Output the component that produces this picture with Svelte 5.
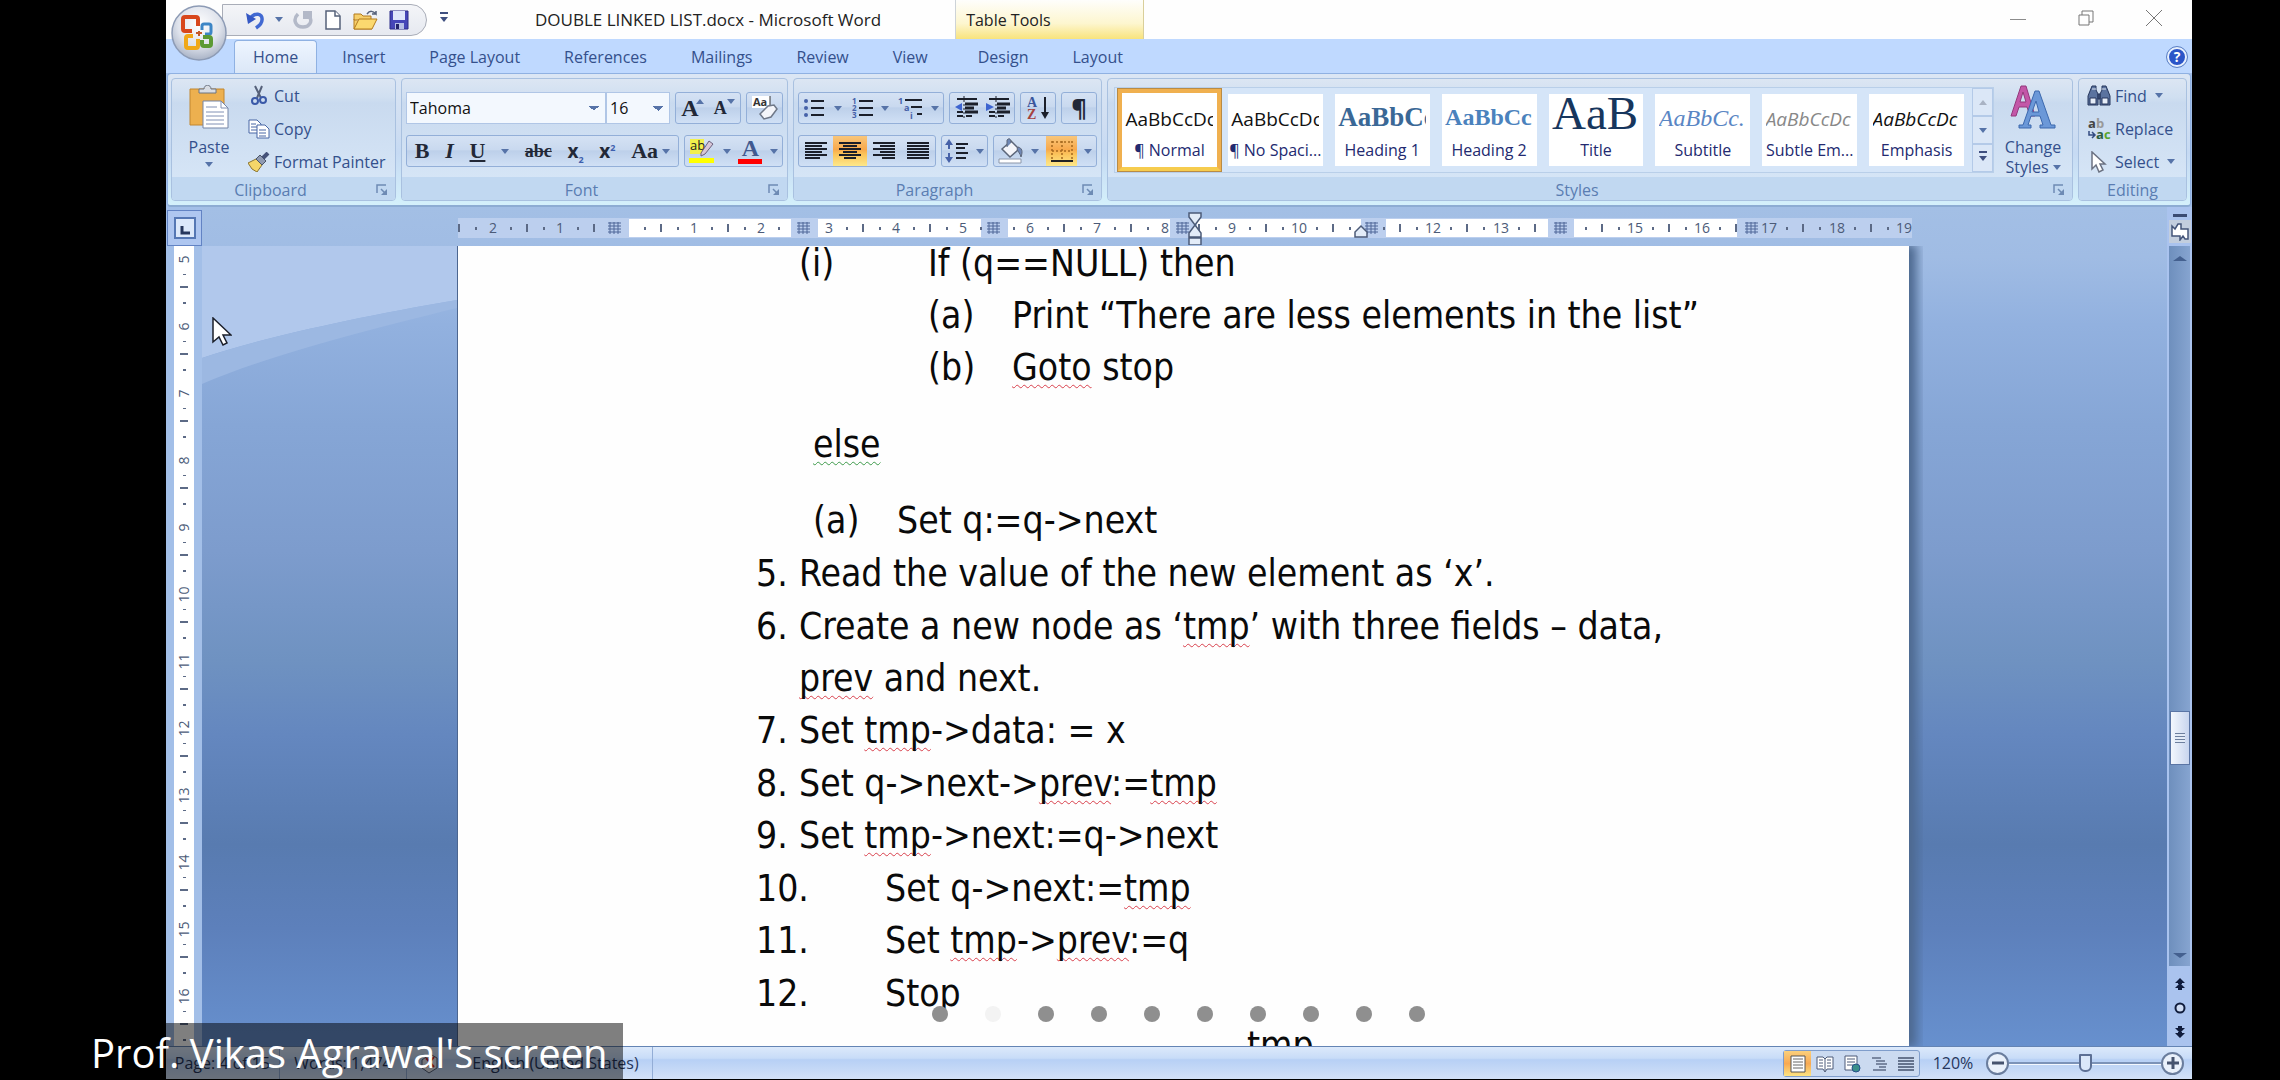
<script lang="ts">
  /**
   * Shared word processor window: title bar, ribbon, rulers, document and status bar,
   * with the presenter caption and the page dots floating above it.
   */

  const tabs = ['Home', 'Insert', 'Page Layout', 'References', 'Mailings', 'Review', 'View'];
  const tableTabs = ['Design', 'Layout'];

  const styles = [
    { name: '¶ Normal', sample: 'AaBbCcDc', kind: 'plain' },
    { name: '¶ No Spaci...', sample: 'AaBbCcDc', kind: 'plain' },
    { name: 'Heading 1', sample: 'AaBbCc', kind: 'h1' },
    { name: 'Heading 2', sample: 'AaBbCc', kind: 'h2' },
    { name: 'Title', sample: 'AaB', kind: 'title' },
    { name: 'Subtitle', sample: 'AaBbCc.', kind: 'subtitle' },
    { name: 'Subtle Em...', sample: 'AaBbCcDc', kind: 'subtle' },
    { name: 'Emphasis', sample: 'AaBbCcDc', kind: 'emphasis' }
  ];

  // Ruler geometry, in pixels
  const UNIT = 67.2;
  const ORIGIN = 169;
  const rulerX = (n: number) => ORIGIN + Math.round(n * UNIT);
  const rulerNumbers = [-2, -1, 1, 2, 3, 4, 5, 6, 7, 8, 9, 10, 12, 13, 15, 16, 17, 18, 19];
  const halves = Array.from({ length: 22 }, (_, i) => rulerX(i - 3) + 34);
  const columns = [156, 345, 535, 724, 913, 1102, 1293];
  const sideNumbers = [5, 6, 7, 8, 9, 10, 11, 12, 13, 14, 15, 16];

  const dots = Array.from({ length: 10 }, (_, i) => i);

  let activeTab = $state('Home');
  let activeStyle = $state('¶ Normal');
  let currentDot = $state(1);
  let zoom = $state(50);
</script>

{#snippet lines(widths: number[], right = false, center = false)}
  <svg width="22" height="20" viewBox="0 0 22 20" stroke="#1b1f2a" stroke-width="2">
    {#each widths as w, i}
      {@const x = right ? 22 - w : center ? (22 - w) / 2 : 0}
      <path d="M{x} {2 + i * 3}h{w}" />
    {/each}
  </svg>
{/snippet}

{#snippet launcher()}
  <button class="launcher" aria-label="More options">
    <svg width="12" height="12" viewBox="0 0 12 12" fill="none" stroke="#6e8bb4" stroke-width="1.5">
      <path d="M1 9V1h9" /><path d="M5 5l5 5" /><path d="M11 5v6H5z" fill="#6e8bb4" stroke="none" />
    </svg>
  </button>
{/snippet}

<div class="stage">
  <div class="window">
    <header class="title-bar">
      <button class="orb" aria-label="Office button">
        <svg width="58" height="58" viewBox="0 0 58 58">
          <defs>
            <radialGradient id="orb" cx="50%" cy="35%" r="65%">
              <stop offset="0" stop-color="#fff" />
              <stop offset="0.6" stop-color="#dfe3ec" />
              <stop offset="1" stop-color="#a9b3c6" />
            </radialGradient>
          </defs>
          <circle cx="29" cy="29" r="27" fill="url(#orb)" stroke="#8d9bb5" stroke-width="1.5" />
          <g fill="none" stroke-width="4">
            <path d="M22 27h-7q-2 0-2-2V15q0-2 2-2h11q2 0 2 2v7" stroke="#d8471c" />
            <path d="M32 26v-4q0-2 2-2h5q2 0 2 2v6q0 2-2 2h-4" stroke="#3d86c6" stroke-width="3" />
            <path d="M23 32h-5q-2 0-2 2v8q0 2 2 2h8q2 0 2-2v-7" stroke="#f0a818" />
            <path d="M33 33h6q2 0 2 2v5q0 2-2 2h-5q-2 0-2-2v-4" stroke="#5c9a34" />
          </g>
          <path d="M29 27v5M26 29h6" stroke="#c45a2a" stroke-width="2" />
        </svg>
      </button>

      <div class="quick">
        <button aria-label="Undo">
          <svg width="20" height="20" viewBox="0 0 20 20" fill="none">
            <path d="M5 9C9 2 18 3 17 10c0 4-3 6-6 8" stroke="#4169d2" stroke-width="3.500" /><path d="M1 3l2 11 8-5z" fill="#3558c4" />
          </svg>
        </button>
        <span class="arrow"></span>
        <button aria-label="Redo">
          <svg width="20" height="20" viewBox="0 0 20 20" fill="none">
            <path d="M5 4c-6 6-2 13 5 13s9-6 7-9" stroke="#b3b9c8" stroke-width="3.500" /><path d="M10 1h9v8H10z" fill="#b3b9c8" />
          </svg>
        </button>
        <button aria-label="New">
          <svg width="20" height="20" viewBox="0 0 20 20" fill="#fff" stroke="#56617a" stroke-width="1.5">
            <path d="M3 1h9l5 5v13H3z" /><path d="M12 1v5h5" />
          </svg>
        </button>
        <button aria-label="Open">
          <svg width="26" height="20" viewBox="0 0 26 20" stroke="#b37a1c">
            <path d="M1 4h7l2 2h8v4H1zM1 9v10h18" fill="#f6cf6b" />
            <path d="M1 19l5-10h18l-5 10z" fill="#fbd96f" />
            <path d="M14 4c3-4 6-3 9 0v-3M23 4h-4" fill="none" stroke="#56617a" stroke-width="1.5" />
          </svg>
        </button>
        <button aria-label="Save">
          <svg width="20" height="20" viewBox="0 0 20 20">
            <path d="M1 1h18v18H1z" fill="#4646b8" stroke="#2d2d88" />
            <path d="M4 1h12v9H4z" fill="#dfe6fb" /><path d="M6 13h9v6H6z" fill="#b7bfe6" />
            <path d="M7 14h3v5H7z" fill="#23236b" />
          </svg>
        </button>
      </div>
      <button class="customize" aria-label="Customize toolbar"><span class="arrow lined"></span></button>

      <h1>DOUBLE LINKED LIST.docx - Microsoft Word</h1>
      <div class="context">Table Tools</div>

      <div class="controls">
        <button aria-label="Minimize">
          <svg width="16" height="16" stroke="#8c8c8c"><path d="M0 9.500h16" /></svg>
        </button>
        <button aria-label="Restore">
          <svg width="16" height="16" fill="none" stroke="#777"><path d="M1 5h10v10H1zM4 5V1h11v11h-4" /></svg>
        </button>
        <button aria-label="Close">
          <svg width="16" height="16" stroke="#777"><path d="M0 0l16 16M16 0L0 16" /></svg>
        </button>
      </div>
    </header>

    <nav class="tabs">
      {#each tabs as tab}
        <button class:active={activeTab === tab} onclick={() => (activeTab = tab)}>{tab}</button>
      {/each}
      <div class="table-tabs">
        {#each tableTabs as tab}
          <button class:active={activeTab === tab} onclick={() => (activeTab = tab)}>{tab}</button>
        {/each}
      </div>
      <button class="help" aria-label="Help">?</button>
    </nav>

    <div class="ribbon">
      <section class="group clipboard">
        <div class="body">
          <button class="big">
            <svg width="40" height="44" viewBox="0 0 40 44">
              <path d="M1 4h34v36H1z" fill="#edb04f" stroke="#c18630" />
              <path d="M10 8V4h5c0-5 7-5 7 0h5v4z" fill="#d9dde4" stroke="#6d7482" />
              <path d="M14 16h18l7 7v20H14z" fill="#fff" stroke="#7585a6" />
              <path d="M32 16v7h7M17 22h11M17 27h18M17 31h18M17 35h18M17 39h18" fill="none" stroke="#8090b4" />
            </svg>
            <span>Paste</span>
            <span class="arrow"></span>
          </button>
          <div class="stack">
            <button>
              <svg width="22" height="22" viewBox="0 0 22 22" fill="none">
                <path d="M7 1l6 12M14 1L9 13" stroke="#56617a" stroke-width="2" />
                <circle cx="7" cy="16" r="3" stroke="#3a59a8" stroke-width="2" /><circle cx="15" cy="15" r="3" stroke="#3a59a8" stroke-width="2" />
              </svg>Cut
            </button>
            <button>
              <svg width="22" height="20" viewBox="0 0 22 20" fill="#fff" stroke="#4867a5">
                <path d="M1 1h8l4 4v9H1zM3 5h5M3 8h7M3 11h7" /><path d="M9 6h8l4 4v9H9zM11 11h7M11 14h7M11 17h7" />
              </svg>Copy
            </button>
            <button>
              <svg width="22" height="20" viewBox="0 0 22 20">
                <path d="M0 11l8-4 6 6-5 7-5-3z" fill="#f5d669" stroke="#8a7430" />
                <path d="M8 7l4-4 6 6-4 4z" fill="#8f9ab2" stroke="#4b5568" /><path d="M15 6l5-5" stroke="#46537a" stroke-width="4" />
              </svg>Format Painter
            </button>
          </div>
        </div>
        <footer><span>Clipboard</span>{@render launcher()}</footer>
      </section>

      <section class="group font">
        <div class="body rows">
          <div class="row">
            <div class="combo">
              <select class="family" aria-label="Font"><option>Tahoma</option></select>
              <select class="size" aria-label="Font size"><option>16</option></select>
            </div>
            <div class="set pair">
              <button class="serif grow" aria-label="Grow font">A<i class="up"></i></button>
              <button class="serif shrink" aria-label="Shrink font">A<i class="down"></i></button>
            </div>
            <div class="set">
              <button aria-label="Clear formatting">
                <svg width="28" height="26" viewBox="0 0 28 26">
                  <path d="M1 1h18v12H1z" fill="#fff" />
                  <text x="2" y="11" font-size="11" font-weight="700" fill="#333">Aa</text>
                  <path d="M19 1v12" stroke="#333" />
                  <path d="M9 19l8-8 6-1 3 4-6 8-7 2z" fill="#f4f5fa" stroke="#6f7888" stroke-width="1.500" />
                </svg>
              </button>
            </div>
          </div>
          <div class="row">
            <div class="set chars">
              <button class="serif"><b>B</b></button>
              <button class="serif"><b><i>I</i></b></button>
              <button class="serif"><b class="under">U</b></button>
              <span class="arrow"></span>
              <button class="serif struck">abc</button>
              <button class="script"><b>x<sub>2</sub></b></button>
              <button class="script"><b>x<sup>2</sup></b></button>
              <button class="serif case">Aa<span class="arrow"></span></button>
            </div>
            <div class="set colours">
              <button aria-label="Highlight colour">
                <svg width="26" height="26" viewBox="0 0 26 26">
                  <path d="M1 1h14v15H1z" fill="#f2f04c" />
                  <text x="1" y="12" font-size="13" fill="#222">ab</text>
                  <path d="M12 15L20 3l4 3-8 10-4 2z" fill="#d8c7d8" stroke="#6b5f7c" />
                  <path d="M0 20h25v5H0z" fill="#ff0" />
                </svg>
              </button>
              <span class="arrow"></span>
              <button class="serif" aria-label="Font colour"><span class="ink">A</span></button>
              <span class="arrow"></span>
            </div>
          </div>
        </div>
        <footer><span>Font</span>{@render launcher()}</footer>
      </section>

      <section class="group paragraph">
        <div class="body rows">
          <div class="row">
            <div class="set lists">
              <button aria-label="Bullets">
                <svg width="22" height="22" viewBox="0 0 22 22" stroke="#1b1f2a" stroke-width="2">
                  <path d="M8 4h13M8 11h13M8 18h13" />
                  <g fill="#4661a8" stroke="none"><circle cx="3" cy="4" r="2" /><circle cx="3" cy="11" r="2" /><circle cx="3" cy="18" r="2" /></g>
                </svg>
              </button>
              <span class="arrow"></span>
              <button aria-label="Numbering">
                <svg width="22" height="22" viewBox="0 0 22 22">
                  <path d="M8 4h14M8 11h14M8 18h14" stroke="#1b1f2a" stroke-width="2" />
                  <g font-size="8" font-weight="700" fill="#4661a8"><text x="1" y="7">1</text><text x="1" y="14">2</text><text x="1" y="21">3</text></g>
                </svg>
              </button>
              <span class="arrow"></span>
              <button aria-label="Multilevel list">
                <svg width="24" height="24" viewBox="0 0 24 24">
                  <path d="M7 4h17M13 11h11M19 18h5" stroke="#1b1f2a" stroke-width="2" />
                  <g font-size="9" font-weight="700" fill="#4661a8"><text x="0" y="8">1</text><text x="6" y="15">a</text><text x="12" y="23">i</text></g>
                </svg>
              </button>
              <span class="arrow"></span>
            </div>
            <div class="set pair">
              {#each ['M8 7L1 11l7 4z', 'M0 7l8 4-8 4z'] as head, i}
                <button aria-label={i ? 'Increase indent' : 'Decrease indent'}>
                  <svg width="24" height="24" viewBox="0 0 24 24">
                    <path d="M3 3h20M3 20h6M12 20h6M3 16h6" stroke="#1b1f2a" stroke-width="2" />
                    <path d="M11 8h13M11 12h9M11 16h13" stroke="#1b1f2a" stroke-width="3" />
                    <path d="M10 0v24" stroke="#1b1f2a" stroke-dasharray="2 2" /><path d={head} fill="#3d64d0" />
                  </svg>
                </button>
              {/each}
            </div>
            <div class="set">
              <button aria-label="Sort">
                <svg width="24" height="26" viewBox="0 0 24 26" font-family="Liberation Serif" font-size="14" font-weight="700">
                  <text x="1" y="12" fill="#3a559c">A</text><text x="1" y="24" fill="#a5423e">Z</text>
                  <path d="M19 2v16" fill="none" stroke="#1b1f2a" stroke-width="2" /><path d="M15 17h8l-4 7z" fill="#1b1f2a" />
                </svg>
              </button>
            </div>
            <div class="set"><button class="pilcrow" aria-label="Show marks">¶</button></div>
          </div>
          <div class="row">
            <div class="set aligns">
              <button aria-label="Align left">{@render lines([22, 17, 22, 17, 22, 15])}</button>
              <button class="on" aria-label="Center">{@render lines([22, 14, 22, 14, 22, 12], false, true)}</button>
              <button aria-label="Align right">{@render lines([22, 15, 22, 15, 22, 13], true)}</button>
              <button aria-label="Justify">{@render lines([22, 22, 22, 22, 22, 22])}</button>
            </div>
            <div class="set spacing">
              <button aria-label="Line spacing">
                <svg width="24" height="24" viewBox="0 0 24 24">
                  <path d="M11 5h12M11 9h9M11 14h12M11 19h10" stroke="#1b1f2a" stroke-width="2" />
                  <path d="M4 0l4 6H5v4H3V6H0zM4 24l4-6H5v-4H3v4H0z" fill="#4661a8" />
                </svg>
              </button>
              <span class="arrow"></span>
            </div>
            <div class="set fills">
              <button aria-label="Shading">
                <svg width="26" height="26" viewBox="0 0 26 26">
                  <path d="M4 11l9-8 8 8-9 8z" fill="#f4f5fa" stroke="#5c6679" stroke-width="1.500" />
                  <path d="M9 9V2c3-3 4 0 4 3M20 9c4 1 5 4 3 10-1-4-3-5-4-8z" fill="#6f87b5" stroke="#5c6679" />
                  <path d="M1 21h22v4H1z" fill="#fff" stroke="#8c97aa" />
                </svg>
              </button>
              <span class="arrow"></span>
              <button class="on" aria-label="Borders">
                <svg width="22" height="22" viewBox="0 0 22 22" fill="none">
                  <path d="M1 2h20M1 11h20M1 1v18M11 1v18M21 1v18" stroke="#a5691f" stroke-width="1.500" stroke-dasharray="2 2" />
                  <path d="M0 21h22" stroke="#222" stroke-width="2" />
                </svg>
              </button>
              <span class="arrow"></span>
            </div>
          </div>
        </div>
        <footer><span>Paragraph</span>{@render launcher()}</footer>
      </section>

      <section class="group styles">
        <div class="body">
          <div class="gallery">
            {#each styles as style}
              <button class="card" class:chosen={activeStyle === style.name} onclick={() => (activeStyle = style.name)}>
                <span class="sample {style.kind}">{style.sample}</span>
                <span class="name">{style.name}</span>
              </button>
            {/each}
            <div class="steppers">
              <button aria-label="Scroll up"><i class="up"></i></button>
              <button aria-label="Scroll down"><span class="arrow"></span></button>
              <button aria-label="More styles"><span class="arrow lined"></span></button>
            </div>
          </div>
          <button class="big change">
            <svg width="46" height="44" viewBox="0 0 46 44">
              <path fill-rule="evenodd" d="M1 31L11 1h5l9 30h-5l-3-9H9l-3 9zM10 17h6L13 7z" fill="#c357a8" stroke="#93397c" />
              <path fill-rule="evenodd" d="M9 43v-3h4L25 6h4l12 34h4v3H30v-3h3l-3-9h-9l-3 9h3v3zM22 27h7l-3-11z" fill="#6b98d8" stroke="#3c68ad" />
            </svg>
            <span>Change</span>
            <span class="with-arrow">Styles<span class="arrow"></span></span>
          </button>
        </div>
        <footer><span>Styles</span>{@render launcher()}</footer>
      </section>

      <section class="group editing">
        <div class="body">
          <div class="stack">
            <button>
              <svg width="24" height="22" viewBox="0 0 24 22" fill="#5b739f" stroke="#26365c">
                <path d="M5 1h4v4l2 4v11H1v-9zM15 1h4l4 10v9H13V9l2-4zM11 9h2v5h-2z" /><path d="M3 13h6v6H3zM15 13h6v6h-6z" fill="#e6edf8" />
                <path d="M5 4h4M15 4h4" stroke="#dfe7f5" />
              </svg>Find<span class="arrow"></span>
            </button>
            <button>
              <svg width="24" height="22" viewBox="0 0 24 22" font-size="13" font-weight="700">
                <text x="1" y="10" fill="#444">a</text><text x="9" y="10" fill="#999">b</text><text x="9" y="21" fill="#2f5e40">a</text><text x="17" y="21" fill="#58a52f">c</text>
                <path d="M2 13v4h5M5 14l3 3-3 3" fill="none" stroke="#334b80" stroke-width="1.500" />
              </svg>Replace
            </button>
            <button>
              <svg width="24" height="22" viewBox="0 0 24 22" fill="#fff" stroke="#6b7282" stroke-width="1.500">
                <path d="M5 1v17l4-4 3 7 4-2-3-6h5z" />
              </svg>Select<span class="arrow"></span>
            </button>
          </div>
        </div>
        <footer><span>Editing</span></footer>
      </section>
    </div>

    <main class="workspace">
      <div class="side">
        <button class="tab-stop" aria-label="Tab stop">
          <svg width="22" height="22" viewBox="0 0 22 22"><path d="M1 1h20v20H1z" fill="#dce8fa" stroke="#5577b4" stroke-width="2" /><path d="M8 9v7h8" fill="none" stroke="#26365c" stroke-width="3" /></svg>
        </button>
        <div class="side-ruler">
          {#each sideNumbers as n}
            <div class="mark"><span>{n}</span><i class="dot"></i><i class="dash"></i><i class="dot"></i></div>
          {/each}
        </div>
      </div>

      <div class="desk">
        <div class="ruler">
          <svg width="1454" height="38" font-size="14" fill="#4c5b78">
            <path d="M0 11h1454v20H0z" fill="#bccfee" />
            <path d="M171 12h162v18H171zM360 12h163v18H360zM550 12h162v18H550zM739 12h168v18H739zM928 12h162v18H928zM1116 12h163v18H1116z" fill="#fff" />
            {#each halves as x}
              {#if x < 1453}
                <path d="M{x} 17v8M{x - 16} 20v3M{x + 17} 20v3" stroke="#5c6a86" stroke-width="2" />
              {/if}
            {/each}
            {#each rulerNumbers as n}
              <text x={rulerX(n)} y="26" text-anchor="middle">{Math.abs(n)}</text>
            {/each}
            {#each columns as x}
              <path d="M{x - 10} 12h20v18h-20z" fill="#bccfee" />
              <path d="M{x - 6} 16h13M{x - 6} 19h13M{x - 6} 22h13M{x - 6} 25h13M{x - 4} 15v12M{x} 15v12M{x + 4} 15v12" stroke="#4f6798" />
            {/each}
            <g fill="#e3ecf8" stroke="#4c5b78" stroke-width="1.500">
              <path d="M731 6h12v4l-6 8-6-8zM731 30v-4l6-8 6 8v4zM731 31h12v7h-12z" />
              <path d="M897 30v-5l6-6 6 6v5z" />
            </g>
          </svg>
        </div>

        <div class="canvas">
          <svg class="sweep" viewBox="0 0 256 140" preserveAspectRatio="none">
            <path d="M0 0h256v54C150 72 60 92 0 112z" fill="#b1c8ec" />
            <path d="M0 112C60 92 150 72 256 54v8C150 88 60 112 0 138z" fill="#9cb8e2" />
          </svg>
          <article class="page">
            <div class="text">
              <div class="line i1"><span class="m129">(i)</span>If (q==NULL) then</div>
              <div class="line i2"><span class="m84">(a)</span>Print “There are less elements in the list”</div>
              <div class="line i2"><span class="m84">(b)</span><span><u>Goto</u> stop</span></div>
              <div class="line i3 apart"><span><u class="grammar">else</u></span></div>
              <div class="line i3"><span class="m84">(a)</span>Set q:=q-&gt;next</div>
              <ol>
                <li><span class="m43">5.</span>Read the value of the new element as ‘x’.</li>
                <li><span class="m43">6.</span><span>Create a new node as ‘<u>tmp</u>’ with three fields – data,<br /><u>prev</u> and next.</span></li>
                <li><span class="m43">7.</span><span>Set <u>tmp</u>-&gt;data: = x</span></li>
                <li><span class="m43">8.</span><span>Set q-&gt;next-&gt;<u>prev</u>:=<u>tmp</u></span></li>
                <li><span class="m43">9.</span><span>Set <u>tmp</u>-&gt;next:=q-&gt;next</span></li>
                <li><span class="m129">10.</span><span>Set q-&gt;next:=<u>tmp</u></span></li>
                <li><span class="m129">11.</span><span>Set <u>tmp</u>-&gt;<u>prev</u>:=q</span></li>
                <li><span class="m129">12.</span>Stop</li>
              </ol>
              <div class="line i4">tmp</div>
            </div>
          </article>
        </div>
      </div>

      <div class="scroll">
        <i class="split"></i>
        <button class="view-ruler" aria-label="View ruler">
          <svg width="18" height="18" viewBox="0 0 18 18" fill="#fff" stroke="#44557a" stroke-width="1.500"><path d="M1 3l3 3 3-5h3v5h7v10h-3l-2-3-3 4v-4H1z" /></svg>
        </button>
        <div class="track">
          <i class="up"></i>
          <div class="thumb"></div>
          <span class="arrow"></span>
        </div>
        <button aria-label="Previous page"><svg width="12" height="12" viewBox="0 0 12 12" fill="#101c3c"><path d="M6 0l5 5H8v1h-1l4 4H8v2H4v-2H1l4-4H4V5H1z" /></svg></button>
        <button aria-label="Browse object"><svg width="12" height="12" viewBox="0 0 12 12"><circle cx="6" cy="6" r="4.500" fill="#cfdcf3" stroke="#101c3c" stroke-width="2" /></svg></button>
        <button aria-label="Next page"><svg width="12" height="12" viewBox="0 0 12 12" fill="#101c3c"><path d="M6 12l5-5H8V6H7l4-4H8V0H4v2H1l4 4H4v1H1z" /></svg></button>
      </div>
    </main>

    <footer class="status">
      <button class="pages">Page: 4 of 15</button>
      <button class="words">Words: 1,474</button>
      <button class="language">
        <svg width="20" height="22" viewBox="0 0 20 22"><path d="M2 8l8-6 7 4v10l-8 5-7-5z" fill="#e8eaf2" stroke="#55617a" /><path d="M6 6l8 9M14 5L6 15" stroke="#d02f2f" stroke-width="2" /></svg>
        English (United States)
      </button>
      <div class="views">
        <button class="on" aria-label="Print layout"><svg width="18" height="18" viewBox="0 0 18 18"><path d="M2 1h14v16H2z" fill="#fff" stroke="#555" /><path d="M4 4h10M4 7h10M4 10h10M4 13h10" stroke="#666" /></svg></button>
        <button aria-label="Full screen reading"><svg width="18" height="18" viewBox="0 0 18 18" fill="#fff" stroke="#4c5b78"><path d="M1 2h6l2 2 2-2h6v12h-6l-2 3-2-3H1zM9 4v12M3 5h4M3 8h4M3 11h4M11 5h4M11 8h4M11 11h4" /></svg></button>
        <button aria-label="Web layout"><svg width="18" height="18" viewBox="0 0 18 18"><path d="M2 1h12v14H2zM4 4h8M4 7h8M4 10h6" fill="#fff" stroke="#4c5b78" /><circle cx="13" cy="13" r="4" fill="#3b8f8a" stroke="#27508a" /></svg></button>
        <button aria-label="Outline"><svg width="18" height="18" viewBox="0 0 18 18" stroke="#5f6c86" stroke-width="1.500"><path d="M2 3h9M6 6h9M6 9h11M9 12h7M3 15h13" /></svg></button>
        <button aria-label="Draft"><svg width="18" height="18" viewBox="0 0 18 18" stroke="#46536e" stroke-width="1.500"><path d="M1 3h16M1 6h16M1 9h16M1 12h16M1 15h16" /></svg></button>
      </div>
      <button class="percent">120%</button>
      <button class="round" aria-label="Zoom out" onclick={() => (zoom -= 10)}><svg width="14" height="14" stroke="#46536e" stroke-width="3"><path d="M1 7h12" /></svg></button>
      <input type="range" min="0" max="100" bind:value={zoom} aria-label="Zoom" />
      <button class="round" aria-label="Zoom in" onclick={() => (zoom += 10)}><svg width="14" height="14" stroke="#46536e" stroke-width="3"><path d="M1 7h12M7 1v12" /></svg></button>
    </footer>
  </div>

  <svg class="pointer" width="20" height="30" viewBox="0 0 20 30">
    <path d="M1 1v24l6-5 4 8 4-2-4-8h8z" fill="#fff" stroke="#1b1f2a" stroke-width="1.500" />
  </svg>
  <div class="caption">Prof. Vikas Agrawal's screen</div>
  <div class="dots">
    {#each dots as d}
      <button class:current={d === currentDot} aria-label="Screen {d + 1}" onclick={() => (currentDot = d)}></button>
    {/each}
  </div>
</div>

<style>
  :global(body) {
    margin: 0;
    background: #000;
  }

  .stage {
    --ui: 'Open Sans', 'Noto Sans', sans-serif;
    --navy: #34508c;
    position: relative;
    box-sizing: border-box;
    height: 100vh;
    padding: 0 88px 1px 166px;
    overflow: hidden;
    background: #000;
    color: var(--navy);
    font: 16px/20px var(--ui);
  }

  .window {
    display: flex;
    flex-direction: column;
    height: 100%;
    background: #a3bfe8;
  }

  button {
    display: flex;
    align-items: center;
    justify-content: center;
    padding: 0;
    border: 0;
    background: none;
    color: inherit;
    font: inherit;
    white-space: nowrap;
  }

  svg {
    display: block;
    flex: none;
  }

  .arrow,
  .down,
  .up {
    flex: none;
    width: 0;
    height: 0;
    border: 4px solid transparent;
    border-top: 5px solid #5673a8;
    border-bottom: 0;
  }

  .up {
    border-top: 0;
    border-bottom: 5px solid #5673a8;
  }

  .lined {
    position: relative;
    border-top-color: #3f4f80;
  }

  /* Bar above the arrow */
  .lined::before {
    position: absolute;
    top: -10px;
    left: -4px;
    width: 8px;
    height: 2px;
    background: #3f4f80;
    content: '';
  }

  /* Title bar */
  .title-bar {
    position: relative;
    display: flex;
    flex: none;
    align-items: center;
    height: 39px;
    background: #fefefe;
  }

  .orb {
    position: absolute;
    z-index: 2;
    top: 4px;
    left: 4px;
  }

  .quick {
    display: flex;
    align-items: center;
    gap: 10px;
    box-sizing: border-box;
    height: 32px;
    margin-left: 56px;
    padding: 0 17px 0 22px;
    border: 1px solid #a9adb8;
    border-radius: 0 16px 16px 0;
    background: linear-gradient(#f4f5f8, #e6e9f0);
  }

  .customize {
    width: 34px;
  }

  h1 {
    margin: 0 74px;
    color: #222;
    font: 17px/20px var(--ui);
    white-space: nowrap;
  }

  .context {
    box-sizing: border-box;
    width: 189px;
    height: 100%;
    padding: 10px;
    border-right: 1px solid #d9cf9a;
    border-left: 1px solid #cdd3d8;
    background: linear-gradient(#fefefc, #fdf6cf 60%, #f8e37c);
    color: #222;
  }

  .controls {
    display: flex;
    gap: 52px;
    margin-left: auto;
    padding: 0 30px 4px 0;
  }

  /* Tabs */
  .tabs {
    display: flex;
    flex: none;
    gap: 8px;
    height: 34px;
    padding: 0 6px 0 69px;
    background: #bfd9ff;
  }

  .tabs button {
    padding: 0 18px;
    border: 1px solid transparent;
    border-bottom: 0;
    border-radius: 4px 4px 0 0;
    margin: 1px -1px 0;
  }

  .tabs button.active {
    border-color: #8fb1e2;
    background: linear-gradient(#eef5ff, #dbe7f7);
  }

  .table-tabs {
    display: flex;
    gap: 8px;
    margin-left: 6px;
  }

  .tabs .help {
    align-self: center;
    width: 20px;
    height: 20px;
    margin-left: auto;
    padding: 0;
    border: 2px solid #e8f0fd;
    border-radius: 50%;
    outline: 1px solid #5b7fc4;
    background: #2b55c8;
    color: #fff;
    font: 700 14px/16px var(--ui);
  }

  /* Ribbon */
  .ribbon {
    display: flex;
    flex: none;
    gap: 5px;
    box-sizing: border-box;
    height: 134px;
    margin: 0 1px;
    padding: 4px 3px;
    border: 1px solid #8fb1e2;
    border-bottom: 2px solid #8dacd3;
    border-radius: 4px;
    background: linear-gradient(#dbe6f4, #cfdef2 40%, #c6daf3 60%, #d4f0fb);
  }

  .group {
    display: flex;
    flex: none;
    flex-direction: column;
    box-sizing: border-box;
    overflow: hidden;
    border: 1px solid #a9c1e0;
    border-radius: 4px;
    background: linear-gradient(#dce6f3, #d0dff1 15%, #c9daef 20%, #d9e8f8);
  }

  .group.clipboard { width: 225px; }
  .group.font { width: 387px; }
  .group.paragraph { width: 309px; }
  .group.styles { flex: 1; }
  .group.editing { width: 109px; }

  .body {
    display: flex;
    flex: 1;
  }

  .group footer {
    display: flex;
    flex: none;
    align-items: center;
    box-sizing: border-box;
    height: 23px;
    padding-top: 2px;
    background: #c1d8f1;
    color: #5a7db2;
  }

  .group footer span {
    flex: 1;
    text-align: center;
  }

  .launcher {
    width: 26px;
  }

  .big {
    flex-direction: column;
    justify-content: flex-start;
    width: 74px;
    padding-top: 6px;
  }

  .big span:not(.arrow) {
    margin-top: 8px;
    line-height: 20px;
  }

  .big > .arrow {
    margin-top: 5px;
  }

  .stack {
    display: flex;
    flex-direction: column;
    gap: 12px;
    padding: 6px 0 0 2px;
  }

  .editing .stack {
    padding-left: 8px;
  }

  .stack button {
    justify-content: flex-start;
    gap: 4px;
    height: 21px;
  }

  .stack .arrow {
    margin-left: 4px;
  }

  .rows {
    flex-direction: column;
    gap: 11px;
    padding: 13px 4px 0;
  }

  .row {
    display: flex;
    gap: 5px;
    height: 32px;
  }

  .combo {
    display: flex;
  }

  select {
    box-sizing: border-box;
    height: 32px;
    padding: 0 3px;
    border: 1px solid #b0c6e6;
    border-radius: 0;
    appearance: none;
    background: #f3f8fe conic-gradient(from -45deg at 50% 100%, #5673a8 90deg, transparent 0) no-repeat right 6px center / 10px 5px;
    color: #111;
    font: 16px/20px var(--ui);
  }

  .family { width: 200px; }
  .size { width: 64px; }

  .set {
    display: flex;
    flex: 1;
    align-items: center;
    justify-content: space-around;
    box-sizing: border-box;
    border: 1px solid #93afd8;
    border-radius: 3px;
    background: linear-gradient(#d5e2f4, #c9d9ef 45%, #bdd0ea 50%, #d0e0f5);
    color: #222837;
  }

  .pair { flex: 0 0 66px; }
  .chars { flex: 0 0 273px; }
  .lists { flex: 0 0 146px; }
  .aligns { flex: 0 0 138px; }
  .spacing { flex: 0 0 47px; }

  .serif {
    font: 22px/26px 'Liberation Serif', serif;
  }

  .under { text-decoration: underline; }
  .struck { font-size: 18px; font-weight: 700; text-decoration: line-through; }
  .grow { font-size: 24px; font-weight: 700; }
  .shrink { font-size: 18px; font-weight: 700; }

  .grow i,
  .shrink i {
    margin-bottom: 14px;
  }

  .grow i {
    margin-left: -3px;
  }

  .case {
    gap: 4px;
    font-weight: 700;
  }

  .script {
    font-size: 19px;
    line-height: 24px;
  }

  sub,
  sup {
    color: #3d5fae;
    font-size: 9px;
    line-height: 0;
  }

  .ink {
    width: 24px;
    height: 26px;
    box-sizing: border-box;
    border-bottom: 5px solid #f00;
    color: #41598f;
    font: 700 24px/20px 'Liberation Serif', serif;
  }

  .aligns button,
  .fills .on {
    align-self: stretch;
  }

  .aligns button {
    flex: 1;
  }

  .fills .on {
    flex: 0 0 31px;
  }

  .set .on {
    background: linear-gradient(#f9c67a, #f8a94c 45%, #fbc35a 60%, #fde88a);
  }

  .pilcrow {
    font: 700 24px/28px var(--ui);
  }

  /* Style gallery */
  .gallery {
    display: flex;
    flex: 1;
    align-self: flex-start;
    height: 86px;
    margin: 8px 0 0 6px;
    padding-left: 2px;
    border: 1px solid #b9cfe9;
    box-sizing: border-box;
    background: #d5e5f8;
  }

  .card {
    flex: 1;
    flex-direction: column;
    box-sizing: border-box;
    overflow: hidden;
    border: 6px solid #d5e5f8;
    background: #fff;
    color: #232a70;
  }

  .card.chosen {
    border: 5px solid #f0b04f;
    border-bottom-color: #f6cc4e;
    outline: 1px solid #b98b45;
    outline-offset: -1px;
  }

  .sample {
    display: flex;
    align-items: flex-end;
    width: 88px;
    height: 34px;
    overflow: hidden;
    color: #111;
    font-size: 19px;
    line-height: 24px;
  }

  .name {
    margin: 9px 0 4px;
  }

  .sample.h1,
  .sample.h2 {
    color: #3a6896;
    font: 700 27px/28px 'Liberation Serif', serif;
  }

  .sample.h2 {
    color: #4b82bd;
    font-size: 24px;
  }

  .sample.title {
    color: #17365d;
    font: 47px/36px 'Liberation Serif', serif;
  }

  .sample.subtitle {
    color: #5a86c4;
    font: italic 24px/26px 'Liberation Serif', serif;
  }

  .sample.subtle {
    color: #888;
    font-style: italic;
  }

  .sample.emphasis {
    font-style: italic;
  }

  .steppers {
    display: flex;
    flex-direction: column;
    width: 21px;
    margin-left: 2px;
  }

  .steppers button {
    flex: 1;
    border: 1px solid #b4cae8;
    background: #dbe7f7;
  }

  .steppers .up {
    border-bottom-color: #a9b3c4;
  }

  .change {
    width: 78px;
  }

  .big.change span:nth-of-type(2) {
    margin-top: 0;
  }

  .with-arrow {
    display: flex;
    align-items: center;
    gap: 4px;
  }

  .with-arrow .arrow {
    margin: 0;
  }

  /* Workspace */
  .workspace {
    display: flex;
    flex: 1;
    min-height: 0;
    background: linear-gradient(
      #a3bfe5, #a0bce4 6%, #92b1df 14%, #86a6d6 26%, #7d9ccd 41%, #6f92c1 54%,
      #6487bf 63%, #587bb0 76%, #5d80bb 86%, #6790ce
    );
  }

  .side {
    display: flex;
    flex: none;
    flex-direction: column;
    width: 36px;
    background: #a3bfe8;
  }

  .tab-stop {
    box-sizing: border-box;
    flex: none;
    height: 36px;
    margin: 3px 0 0 1px;
    border: 1px solid #6283c4;
    background: #aec6f0;
  }

  .side-ruler {
    flex: 1;
    min-height: 0;
    width: 20px;
    margin-left: 8px;
    padding-top: 2px;
    overflow: hidden;
    background: #fff;
    color: #4c5b78;
    font-size: 14px;
  }

  .mark {
    display: flex;
    flex-direction: column;
    align-items: center;
    height: 67px;
  }

  .mark span {
    height: 25px;
    line-height: 20px;
    writing-mode: vertical-rl;
    text-align: center;
    rotate: 180deg;
  }

  .dot {
    width: 3px;
    height: 2px;
    margin: 3px 0 11px;
    background: #5c6a86;
  }

  .dash {
    width: 8px;
    height: 2px;
    background: #5c6a86;
  }

  .dash + .dot {
    margin-top: 14px;
  }

  .desk {
    display: flex;
    flex: 1;
    flex-direction: column;
    min-width: 0;
  }

  .ruler {
    display: grid;
    flex: none;
    grid-template-columns: 256fr 1709fr;
    height: 39px;
  }

  .ruler svg {
    grid-column: 2;
  }

  .canvas {
    display: grid;
    flex: 1;
    grid-template-columns: 255fr 1452fr 258fr;
    min-height: 0;
  }

  .sweep {
    width: 100%;
    height: 140px;
  }

  .page {
    overflow: hidden;
    border-left: 1px solid #4c6690;
    box-shadow: 6px 0 10px 2px #4d6990;
    clip-path: inset(0 -14px 0 0);
    background: #fefefe;
  }

  .text {
    margin-top: -8px;
    padding-left: 298px;
    color: #0a0a0a;
    font: 37px/52px 'DejaVu Sans Condensed', 'Noto Sans', sans-serif;
    white-space: nowrap;
  }

  .line,
  li {
    display: flex;
  }

  .i1 { padding-left: 43px; }
  .i2 { padding-left: 172px; }
  .i3 { padding-left: 57px; }
  .i4 { padding-left: 491px; }

  .m43 { flex: 0 0 43px; }
  .m84 { flex: 0 0 84px; }
  .m129 { flex: 0 0 129px; }

  .apart {
    margin: 25px 0 24px;
  }

  ol {
    margin: 1px 0 0;
    padding: 0;
    list-style: none;
  }

  li:nth-child(even) {
    padding-top: 1px;
  }

  u {
    text-decoration: underline wavy #d8404c 1px;
    text-decoration-skip-ink: none;
    text-underline-offset: 4px;
  }

  .grammar {
    text-decoration-color: #3c9a4a;
  }

  /* Scroll bar */
  .scroll {
    display: flex;
    flex: none;
    flex-direction: column;
    align-items: center;
    gap: 12px;
    width: 25px;
    padding-bottom: 8px;
    background: #aac3ee;
  }

  .split {
    width: 14px;
    height: 3px;
    margin: 7px 0 -9px;
    background: #3a4b73;
  }

  .view-ruler {
    width: 22px;
    height: 23px;
    background: #c3cede;
  }

  .track {
    display: flex;
    flex: 1;
    flex-direction: column;
    align-items: center;
    justify-content: space-between;
    box-sizing: border-box;
    width: 21px;
    margin-top: -9px;
    padding: 10px 0 8px;
    background: linear-gradient(90deg, #6e8fbd, #86a4d0);
  }

  .track .up,
  .track .arrow {
    border-right-width: 7px;
    border-left-width: 7px;
    border-top-color: #44608f;
    border-bottom-color: #44608f;
  }

  .thumb {
    width: 18px;
    height: 52px;
    margin-top: 262px;
    border: 1px solid #5a75a5;
    background:
      repeating-linear-gradient(#6d7f9e 0 1px, #e3ebf7 1px 3px) no-repeat center / 10px 10px,
      linear-gradient(90deg, #f3f7fd, #c8d5ee);
  }

  /* Status bar */
  .status {
    display: flex;
    flex: none;
    align-items: center;
    box-sizing: border-box;
    height: 33px;
    padding-right: 8px;
    border-top: 1px solid #6484b4;
    background: linear-gradient(#dce9fb, #c8dcf8 35%, #b7d0f5 40%, #d3e1f7);
    color: #26365c;
  }

  .status > button {
    align-self: stretch;
  }

  .pages { width: 114px; border-right: 1px solid #93add6; }
  .words { width: 127px; border-right: 1px solid #93add6; }

  .language {
    gap: 32px;
    width: 246px;
    border-right: 1px solid #93add6;
  }

  .views {
    display: flex;
    align-self: stretch;
    margin: 3px 0 2px auto;
    border: 1px solid #7f9dcb;
    border-radius: 3px;
    background: #cbdaf0;
  }

  .views button {
    width: 27px;
  }

  .views .on {
    background: linear-gradient(#fbd07c, #f8a953 50%, #fde482);
  }

  .percent {
    width: 66px;
  }

  .status .round {
    align-self: center;
    box-sizing: border-box;
    width: 23px;
    height: 23px;
    border: 2px solid #6a7d9d;
    border-radius: 50%;
    background: #eaf1fb;
  }

  input[type='range'] {
    width: 152px;
    height: 20px;
    margin: 0;
    appearance: none;
    background: linear-gradient(#7c93b8 0 50%, #f4f8fe 50%) no-repeat center / 100% 3px;
  }

  input[type='range']::-webkit-slider-thumb {
    width: 13px;
    height: 18px;
    border: 2px solid #5d7095;
    border-radius: 1px 1px 6px 6px;
    appearance: none;
    background: #dbe8fa;
  }

  /* Overlays */
  .pointer {
    position: absolute;
    top: 317px;
    left: 212px;
  }

  .caption {
    position: absolute;
    bottom: 1px;
    left: 78px;
    height: 56px;
    padding: 0 15px 0 13px;
    background: rgba(0, 0, 0, 0.5);
    color: #fff;
    font: 40px/60px var(--ui);
    white-space: nowrap;
  }

  .dots {
    position: absolute;
    bottom: 58px;
    left: 932px;
    display: flex;
    gap: 37px;
  }

  .dots button {
    width: 16px;
    height: 16px;
    border-radius: 50%;
    background: #8f8f8f;
  }

  .dots .current {
    background: #f3f3f3;
  }
</style>
